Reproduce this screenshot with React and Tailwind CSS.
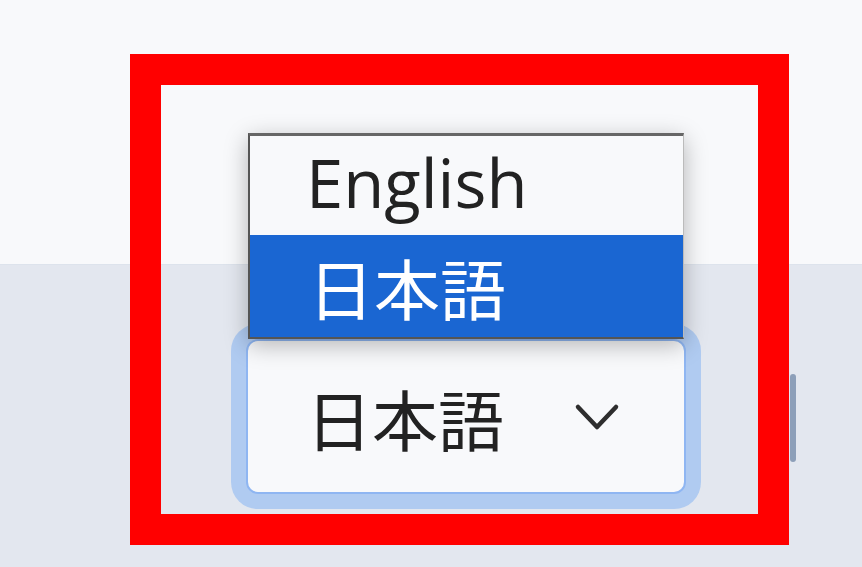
import React from 'react';

const jp = { fontFamily: '"Noto Sans CJK JP", "Noto Sans", sans-serif' };

export default function App() {
  return (
    <div className="relative w-[862px] h-[567px] overflow-hidden flex flex-col" style={{ fontFamily: '"Open Sans", "Noto Sans CJK JP", sans-serif' }}>
      {/* top band */}
      <div className="h-[265px] bg-[#f8f9fb] border-b border-[#dde3ec]" />

      {/* bottom band with the select */}
      <div className="flex-1 bg-[#e3e7ef] pl-[246px] pt-[74px] flex items-start">
        <div className="w-[440px] h-[155px] rounded-[12px] bg-[#f8f9fb] border-2 border-[#8fb6f2] shadow-[0_0_0_15px_#b0cbf1] flex items-center justify-between pl-[58px] pr-[64px]">
          <span className="text-[66px] leading-none text-[#222]" style={jp}>日本語</span>
          <svg width="46" height="30" viewBox="0 0 46 30" fill="none" stroke="#2e2e2e" strokeWidth="4.5" strokeLinecap="round" strokeLinejoin="round">
            <path d="M4 5 L23 25 L42 5" />
          </svg>
        </div>
        <div className="ml-[104px] mt-[35px] w-[6px] h-[88px] bg-[#8d9fb9] rounded-sm" />
      </div>

      {/* open dropdown list */}
      <div className="absolute left-[248px] top-[133px] w-[436px] border-t-[3px] border-l-2 border-b-2 border-r border-t-[#666] border-l-[#555] border-b-[#555] border-r-[#bbb] bg-[#f8f9fb] shadow-[0_6px_22px_rgba(0,0,0,0.28)]">
        <div className="h-[99px] flex items-center pl-[56px]">
          <span className="text-[67px] leading-none text-[#222] -mt-[6px]">English</span>
        </div>
        <div className="h-[102px] bg-[#1a66d2] flex items-center pl-[58px]">
          <span className="text-[66px] leading-none text-white" style={jp}>日本語</span>
        </div>
      </div>

      {/* annotation box */}
      <div className="absolute left-[130px] top-[54px] w-[659px] h-[491px] border-[31px] border-[#ff0000]" />
    </div>
  );
}
